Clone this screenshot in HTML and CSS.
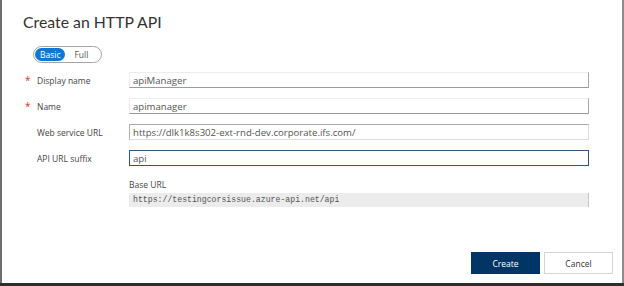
FILE: index.html
```html
<!DOCTYPE html>
<html>
<head>
    <title>Create an HTTP API</title>
    <link rel="stylesheet" href="styles.css">
</head>
<body>
    <div class="dialog">
        <h1 class="title">Create an HTTP API</h1>

        <div class="toggle">
            <span class="toggle-opt active">Basic</span>
            <span class="toggle-opt">Full</span>
        </div>

        <form class="form">
            <div class="row">
                <span class="req">*</span>
                <label for="displayName">Display name</label>
                <input class="field plain" type="text" id="displayName" value="apiManager">
            </div>
            <div class="row">
                <span class="req">*</span>
                <label for="name">Name</label>
                <input class="field plain" type="text" id="name" value="apimanager">
            </div>
            <div class="row">
                <span class="req"></span>
                <label for="serviceUrl">Web service URL</label>
                <input class="field url" type="text" id="serviceUrl" value="https://dlk1k8s302-ext-rnd-dev.corporate.ifs.com/">
            </div>
            <div class="row">
                <span class="req"></span>
                <label for="suffix">API URL suffix</label>
                <input class="field focus" type="text" id="suffix" value="api">
            </div>
            <div class="base">
                <div class="base-label">Base URL</div>
                <div class="base-box">https://testingcorsissue.azure-api.net/api</div>
            </div>
        </form>

        <div class="actions">
            <button class="btn primary">Create</button>
            <button class="btn">Cancel</button>
        </div>
    </div>
</body>
</html>
```

FILE: styles.css
```css
html, body {
    margin: 0;
    padding: 0;
}
body {
    width: 624px;
    height: 286px;
    background-color: #2e2e2a;
    font-family: "Open Sans", "Noto Sans", sans-serif;
    color: #333;
    overflow: hidden;
}
.dialog {
    box-sizing: border-box;
    width: 624px;
    height: 283px;
    background-color: #fff;
    border-left: 2px solid #6e6e6e;
    border-right: 2px solid #8c8c8c;
    padding: 11px 0 0 21px;
    display: flex;
    flex-direction: column;
}
.title {
    margin: 0;
    font-family: Lato, "Open Sans", sans-serif;
    font-size: 15.8px;
    font-weight: 400;
    line-height: 22px;
    color: #333;
}
.toggle {
    margin: 13px 0 0 10px;
    width: 65px;
    height: 15px;
    border: 1px solid #a6a6a6;
    border-radius: 9px;
    display: flex;
    align-items: center;
    padding: 0 1px;
}
.toggle-opt {
    font-size: 8.5px;
    line-height: 13px;
    color: #555;
    padding: 0 6px;
    border-radius: 7px;
}
.toggle-opt.active {
    background-color: #0f78d4;
    color: #fff;
    padding: 0 5px 0 5px;
    margin-right: 3px;
}
.form {
    margin-top: 9px;
    display: flex;
    flex-direction: column;
    gap: 10px;
}
.row {
    display: flex;
    align-items: center;
    height: 16px;
}
.req {
    width: 14px;
    color: #d9342b;
    font-size: 10px;
    padding-left: 2px;
    box-sizing: border-box;
}
.row label {
    width: 92px;
    font-size: 8.5px;
    color: #444;
}
.field {
    box-sizing: border-box;
    width: 460px;
    height: 16px;
    margin: 0;
    padding: 0 3px;
    font-family: "Open Sans", "Noto Sans", sans-serif;
    font-size: 9.6px;
    color: #555;
    background-color: #fff;
    outline: none;
}
.field.plain {
    border: 1px solid #ededed;
    border-bottom: 1px solid #9a9a9a;
    border-right: 1px solid #a8a8a8;
}
.field.url {
    border: 1px solid #dcdcdc;
    border-top: 1px solid #a8a8a8;
    border-left: 1px solid #b4b4b4;
}
.field.focus {
    border: 1px solid #2f5677;
}
.base {
    margin: 3px 0 0 106px;
}
.base-label {
    font-size: 8.5px;
    color: #444;
    line-height: 12px;
}
.base-box {
    box-sizing: border-box;
    width: 460px;
    height: 14px;
    margin-top: 2px;
    padding: 0 4px;
    background-color: #ececec;
    border-right: 1px solid #c4c4c4;
    font-family: "Liberation Mono", monospace;
    font-size: 8.2px;
    line-height: 14px;
    color: #555;
}
.actions {
    margin-top: auto;
    margin-bottom: 9px;
    margin-right: 9px;
    display: flex;
    justify-content: flex-end;
    gap: 4px;
}
.btn {
    box-sizing: border-box;
    width: 69px;
    height: 22px;
    font-family: "Open Sans", "Noto Sans", sans-serif;
    font-size: 8.5px;
    color: #333;
    background-color: #fff;
    border: 1px solid #d4d4d4;
    padding: 0;
}
.btn.primary {
    background-color: #003566;
    border-color: #003566;
    color: #fff;
}
```
